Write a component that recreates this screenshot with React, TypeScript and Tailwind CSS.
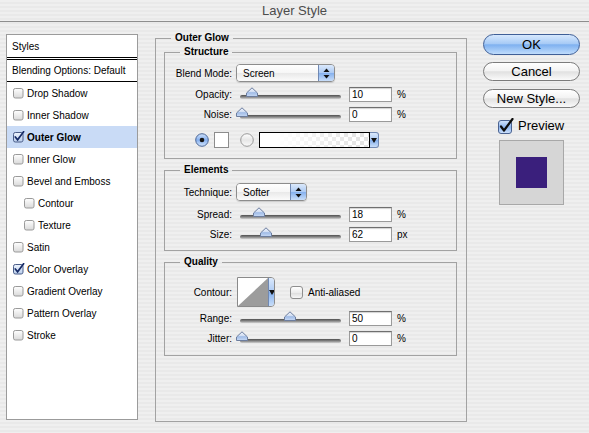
import React from 'react';

const stripes =
  'bg-[image:repeating-linear-gradient(180deg,#efefef_0px,#efefef_2px,#e9e9e9_2px,#e9e9e9_4px)]';

type StyleItem = { name: string; checked?: boolean; active?: boolean; indent?: boolean };

const styleItems: StyleItem[] = [
  { name: 'Drop Shadow' },
  { name: 'Inner Shadow' },
  { name: 'Outer Glow', checked: true, active: true },
  { name: 'Inner Glow' },
  { name: 'Bevel and Emboss' },
  { name: 'Contour', indent: true },
  { name: 'Texture', indent: true },
  { name: 'Satin' },
  { name: 'Color Overlay', checked: true },
  { name: 'Gradient Overlay' },
  { name: 'Pattern Overlay' },
  { name: 'Stroke' },
];

const ListCheck = ({ on }: { on?: boolean }) => (
  <svg width="12" height="12" viewBox="0 0 12 12" className="shrink-0">
    <defs>
      <linearGradient id="lcOff" x1="0" y1="0" x2="0" y2="1">
        <stop offset="0" stopColor="#ffffff" />
        <stop offset="1" stopColor="#d9d9d9" />
      </linearGradient>
      <linearGradient id="lcOn" x1="0" y1="0" x2="0" y2="1">
        <stop offset="0" stopColor="#eef4fd" />
        <stop offset="1" stopColor="#b9cdeb" />
      </linearGradient>
    </defs>
    <rect x="0.5" y="1.5" width="9.5" height="9.5" rx="1.8" fill={on ? 'url(#lcOn)' : 'url(#lcOff)'} stroke={on ? '#4a5d88' : '#9a9a9a'} />
    {on && <path d="M2.3 6 L4.6 8.8 L10.6 0.8" fill="none" stroke="#152a66" strokeWidth="1.7" strokeLinecap="round" />}
  </svg>
);

const Thumb = () => (
  <svg width="12" height="10" viewBox="0 0 12 10">
    <defs>
      <linearGradient id="thumbFill" x1="0" y1="0" x2="0" y2="1">
        <stop offset="0" stopColor="#f2f6fd" />
        <stop offset="0.5" stopColor="#cfdcf2" />
        <stop offset="0.55" stopColor="#9fbbe6" />
        <stop offset="1" stopColor="#c8daf5" />
      </linearGradient>
    </defs>
    <path d="M0.5 6 L6 0.8 L11.5 6 V9.5 H0.5 Z" fill="url(#thumbFill)" stroke="#6c7d9e" strokeLinejoin="round" />
  </svg>
);

// thumb centre sits 2px into the groove and runs 95px over the full range
const Slider = ({ pct }: { pct: number }) => (
  <div className="relative w-[101px] h-[16px] ml-[8px]">
    <div className="absolute left-0 right-0 top-[9px] h-[4px] rounded-full bg-[linear-gradient(#4f4f4f,#858585_50%,#d0d0d0)]" />
    <div className="absolute top-[1px] leading-none" style={{ left: 2 + pct * 0.95 - 6 }}>
      <Thumb />
    </div>
  </div>
);

const NumField = ({ value }: { value: string }) => (
  <div className="ml-[8px] w-[43px] h-[15px] bg-white border border-[#9a9a9a] border-t-[#6f6f6f] shadow-[inset_0_1px_1px_rgba(0,0,0,0.18)] pl-[2px] text-[10px] leading-[13px] text-black">
    {value}
  </div>
);

const UpDown = () => (
  <svg width="7" height="11" viewBox="0 0 7 11">
    <path d="M3.5 0.5 L6.5 4 H0.5 Z" fill="#111" />
    <path d="M3.5 10.5 L6.5 7 H0.5 Z" fill="#111" />
  </svg>
);

const DownArrow = () => (
  <svg width="6" height="5" viewBox="0 0 6 5">
    <path d="M0 0 H6 L3 5 Z" fill="#111" />
  </svg>
);

const Popup = ({ value, className }: { value: string; className: string }) => (
  <div className={`ml-[4px] flex h-[18px] rounded-[4px] border border-[#8d8d8d] overflow-hidden shadow-[0_1px_1px_rgba(0,0,0,0.15)] ${className}`}>
    <div className="flex-1 flex items-center pl-[6px] text-[10px] bg-[linear-gradient(#ffffff,#f6f6f6_50%,#e9e9e9_52%,#fbfbfb)]">
      {value}
    </div>
    <div className="w-[16px] flex items-center justify-center border-l border-[#7189b3] bg-[linear-gradient(#dbe9fc,#aecbf3_48%,#86b1ee_52%,#c9def9)]">
      <UpDown />
    </div>
  </div>
);

const Radio = ({ on }: { on?: boolean }) => (
  <svg width="14" height="14" viewBox="0 0 14 14" className="shrink-0">
    <defs>
      <linearGradient id="radOn" x1="0" y1="0" x2="0" y2="1">
        <stop offset="0" stopColor="#cfe1fb" />
        <stop offset="0.5" stopColor="#86b0ee" />
        <stop offset="1" stopColor="#d3e5fd" />
      </linearGradient>
      <linearGradient id="radOff" x1="0" y1="0" x2="0" y2="1">
        <stop offset="0" stopColor="#ffffff" />
        <stop offset="0.5" stopColor="#e6e6e6" />
        <stop offset="1" stopColor="#fafafa" />
      </linearGradient>
    </defs>
    <circle cx="7" cy="7" r="6.3" fill={on ? 'url(#radOn)' : 'url(#radOff)'} stroke={on ? '#4c6796' : '#999999'} />
    {on && <circle cx="7" cy="7" r="2.3" fill="#161616" />}
  </svg>
);

const Row = ({ label, children, className = 'h-[20px]' }: { label: string; children: React.ReactNode; className?: string }) => (
  <div className={`flex items-center ${className}`}>
    <div className="w-[67px] text-right text-[10px] text-black">{label}</div>
    {children}
  </div>
);

const Unit = ({ children }: { children: React.ReactNode }) => (
  <span className="ml-[5px] text-[10px] text-black">{children}</span>
);

const legendCls = 'ml-[15px] px-[4px] text-[10px] leading-[12px] font-bold text-black';
const groupCls = 'w-full border border-[#a2a2a2] p-0';

export default function App() {
  return (
    <div className={`w-[589px] h-[433px] overflow-hidden ${stripes} font-['Liberation_Sans',Arial,sans-serif] text-black`}>
      {/* title bar */}
      <div className="h-[22px] border-b border-[#8e8e8e] flex items-center justify-center text-[13px] text-[#4c4c4c]">
        Layer Style
      </div>

      <div className="flex pl-[6px]">
        {/* styles list */}
        <div className="mt-[12px] w-[132px] h-[386px] bg-white border border-[#9b9b9b] text-[10px]">
          <div className="h-[22px] flex items-center pl-[5px]">Styles</div>
          <div className="h-[3px] border-y border-black" />
          <div className="h-[22px] flex items-center pl-[5px] border-b border-black">Blending Options: Default</div>
          {styleItems.map((item) => (
            <div
              key={item.name}
              className={`h-[22px] flex items-center gap-[2px] ${item.indent ? 'pl-[17px]' : 'pl-[6px]'} ${item.active ? 'bg-[#c9dbf6] font-bold' : ''}`}
            >
              <ListCheck on={item.checked} />
              <span>{item.name}</span>
            </div>
          ))}
        </div>

        {/* Outer Glow settings */}
        <fieldset className="ml-[17px] mt-[10px] w-[312px] h-[390px] border border-[#a2a2a2] pl-[8px] pr-[9px] pt-[2px]">
          <legend className="ml-[7px] px-[4px] text-[10px] leading-[12px] font-bold">Outer Glow</legend>

          <fieldset className={`${groupCls} pt-[6px] pb-[10px]`}>
            <legend className={legendCls}>Structure</legend>
            <Row label="Blend Mode:" className="h-[18px]">
              <Popup value="Screen" className="w-[99px]" />
            </Row>
            <Row label="Opacity:" className="h-[20px] mt-[2px]">
              <Slider pct={10} />
              <NumField value="10" />
              <Unit>%</Unit>
            </Row>
            <Row label="Noise:">
              <Slider pct={0} />
              <NumField value="0" />
              <Unit>%</Unit>
            </Row>
            <div className="mt-[8px] h-[16px] flex items-center pl-[30px]">
              <Radio on />
              <div className="ml-[5px] w-[15px] h-[16px] bg-white border border-[#8c8c8c]" />
              <div className="ml-[11px]">
                <Radio />
              </div>
              <div className="ml-[5px] flex h-[16px]">
                <div className="w-[111px] h-full border border-black bg-[image:linear-gradient(to_right,#ffffff_15%,rgba(255,255,255,0)_90%),repeating-conic-gradient(#e4e4e4_0_25%,#ffffff_0_50%)] bg-[length:100%_100%,8px_8px]" />
                <div className="w-[9px] h-full flex items-center justify-center rounded-r-[3px] border border-l-0 border-[#7189b3] bg-[linear-gradient(#dbe9fc,#aecbf3_48%,#86b1ee_52%,#c9def9)]">
                  <DownArrow />
                </div>
              </div>
            </div>
          </fieldset>

          <fieldset className={`${groupCls} mt-[5px] pt-[7px] pb-[6px]`}>
            <legend className={legendCls}>Elements</legend>
            <Row label="Technique:" className="h-[18px]">
              <Popup value="Softer" className="w-[71px]" />
            </Row>
            <Row label="Spread:" className="h-[20px] mt-[3px]">
              <Slider pct={18} />
              <NumField value="18" />
              <Unit>%</Unit>
            </Row>
            <Row label="Size:">
              <Slider pct={24.8} />
              <NumField value="62" />
              <Unit>px</Unit>
            </Row>
          </fieldset>

          <fieldset className={`${groupCls} mt-[5px] pt-[9px] pb-[7px]`}>
            <legend className={legendCls}>Quality</legend>
            <Row label="Contour:" className="h-[30px]">
              <div className="ml-[5px] flex w-[38px] h-[30px] border border-[#8a8a8a] rounded-r-[4px] overflow-hidden">
                <svg width="30" height="28" viewBox="0 0 30 28" className="shrink-0">
                  <rect width="30" height="28" fill="#ffffff" />
                  <polygon points="0,28 30,0 30,28" fill="#9c9c9c" />
                </svg>
                <div className="flex-1 flex items-center justify-center border-l border-[#7189b3] bg-[linear-gradient(#dbe9fc,#aecbf3_48%,#86b1ee_52%,#c9def9)]">
                  <DownArrow />
                </div>
              </div>
              <div className="ml-[15px] w-[13px] h-[13px] rounded-[3px] border border-[#8e8e8e] bg-[linear-gradient(#ffffff,#ececec_50%,#dcdcdc_52%,#f7f7f7)]" />
              <span className="ml-[5px] text-[10px]">Anti-aliased</span>
            </Row>
            <Row label="Range:" className="h-[20px] mt-[1px]">
              <Slider pct={50} />
              <NumField value="50" />
              <Unit>%</Unit>
            </Row>
            <Row label="Jitter:">
              <Slider pct={0} />
              <NumField value="0" />
              <Unit>%</Unit>
            </Row>
          </fieldset>
        </fieldset>

        {/* buttons and preview */}
        <div className="ml-[16px] mt-[12px] w-[97px] flex flex-col">
          <button className="h-[21px] w-full rounded-full border border-[#3f5f97] bg-[linear-gradient(#d6e8fd,#a8cbf6_45%,#7fb1f0_52%,#bfdcfc)] text-[13px] leading-none">
            OK
          </button>
          <button className="mt-[7px] h-[19px] w-full rounded-full border border-[#7c7c7c] bg-[linear-gradient(#ffffff,#f3f3f3_45%,#e1e1e1_52%,#fafafa)] text-[13px] leading-none">
            Cancel
          </button>
          <button className="mt-[8px] h-[19px] w-full rounded-full border border-[#7c7c7c] bg-[linear-gradient(#ffffff,#f3f3f3_45%,#e1e1e1_52%,#fafafa)] text-[13px] leading-none">
            New Style...
          </button>
          <div className="mt-[10px] h-[16px] flex items-center pl-[15px]">
            <svg width="17" height="16" viewBox="0 0 17 16" className="shrink-0">
              <defs>
                <linearGradient id="pvOn" x1="0" y1="0" x2="0" y2="1">
                  <stop offset="0" stopColor="#d4e5fc" />
                  <stop offset="0.5" stopColor="#8db5ef" />
                  <stop offset="1" stopColor="#cfe2fc" />
                </linearGradient>
              </defs>
              <rect x="0.5" y="2.5" width="13" height="13" rx="2.5" fill="url(#pvOn)" stroke="#4b6391" />
              <path d="M3 8.5 L6 12.5 L14.5 1" fill="none" stroke="#0c0c0c" strokeWidth="2.2" strokeLinecap="round" strokeLinejoin="round" />
            </svg>
            <span className="ml-[3px] text-[13px]">Preview</span>
          </div>
          <div className="mt-[6px] ml-[16px] w-[65px] h-[65px] border border-[#a8a8a8] bg-[#d6d6d6] flex items-center justify-center">
            <div className="w-[31px] h-[31px] bg-[#3a1f7c]" />
          </div>
        </div>
      </div>
    </div>
  );
}
